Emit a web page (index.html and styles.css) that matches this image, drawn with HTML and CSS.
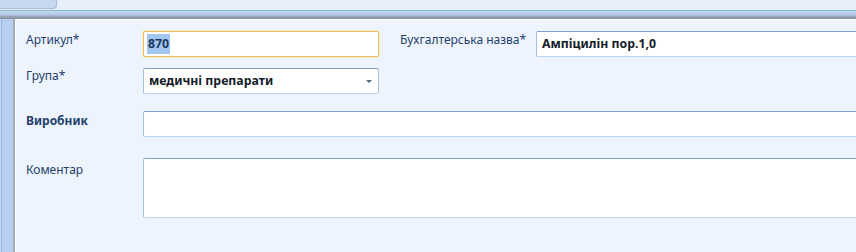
FILE: index.html
```html
<!DOCTYPE html>
<html lang="uk">
<head>
<meta charset="utf-8">
<title>Форма</title>
<link rel="stylesheet" href="styles.css">
</head>
<body>
<div class="window">
  <div class="topbar"><div class="tab"></div></div>
  <div class="header"></div>
  <div class="main">
    <div class="side"></div>
    <div class="panel">
      <div class="row r1">
        <label class="lbl">Артикул*</label>
        <div class="field short focus"><span class="sel">870</span></div>
        <label class="lbl lbl2">Бухгалтерська назва*</label>
        <div class="field grow">Ампіцилін пор.1,0</div>
      </div>
      <div class="row r2">
        <label class="lbl">Група*</label>
        <div class="field short combo"><span>медичні препарати</span><span class="arrow"></span></div>
      </div>
      <div class="row r3">
        <label class="lbl bold">Виробник</label>
        <div class="field grow"></div>
      </div>
      <div class="row r4">
        <label class="lbl">Коментар</label>
        <div class="field grow memo"></div>
      </div>
    </div>
  </div>
</div>
</body>
</html>
```
FILE: styles.css
```css
html, body {
  margin: 0;
  padding: 0;
  overflow: hidden;
  width: 856px;
  height: 252px;
  background: #eef4fd;
  font-family: "Noto Sans", "Liberation Sans", sans-serif;
  font-size: 12px;
}
.window {
  width: 856px;
  height: 252px;
  display: flex;
  flex-direction: column;
}
.topbar {
  height: 10px;
  background: #e6eff9;
  flex: none;
}
.tab {
  width: 56px;
  height: 8px;
  background: #c6d8ef;
  border-right: 1px solid #a9bcd4;
  border-bottom: 1px solid #a9bcd4;
  border-bottom-right-radius: 4px;
}
.header {
  height: 8px;
  flex: none;
  border-top: 1px solid #86bcc6;
  background: linear-gradient(#c3d8f3 0, #b2c8e6 50%, #9aa8ba 65%, #868f9c 100%);
}
.main {
  flex: 1;
  display: flex;
  min-height: 0;
}
.side {
  width: 12px;
  flex: none;
  background: #b6cef0;
  border-left: 1px solid #c4d7f1;
  box-shadow: inset 1px 0 0 #98b6de;
  border-right: 2px solid #a3adba;
}
.panel {
  flex: 1;
  min-width: 0;
  padding: 12px 0 0 11px;
  background: #eef4fd;
  box-shadow: inset 1px 1px 0 #ffffff;
  border-top-left-radius: 3px;
  box-sizing: border-box;
}
.row {
  display: flex;
  align-items: flex-start;
}
.r2 { margin-top: 11px; }
.r3 { margin-top: 17px; }
.r4 { margin-top: 21px; }
.lbl {
  width: 117px;
  flex: none;
  color: #23406a;
  line-height: 16px;
  padding-top: 1px;
}
.r3 .lbl { padding-top: 2px; }
.r4 .lbl { padding-top: 4px; }
.r2 .lbl { padding-top: 0; }
.lbl2 {
  width: 136px;
  margin-left: 21px;
}
.bold { font-weight: bold; }
.field {
  box-sizing: border-box;
  height: 26px;
  background: #ffffff;
  border: 1px solid #a6c0e7;
  border-top-color: #7e9ed0;
  border-bottom-color: #bad4f2;
  border-radius: 2px;
  padding: 0 5px;
  font-weight: bold;
  font-size: 12.3px;
  color: #141c28;
  line-height: 24px;
  white-space: nowrap;
  overflow: hidden;
}
.short { width: 236px; flex: none; }
.grow {
  flex: 1;
  min-width: 0;
  border-right: none;
  border-top-right-radius: 0;
  border-bottom-right-radius: 0;
}
.focus {
  border-color: #e2c263;
  box-shadow: 0 0 0 1px #f7ebc4;
  padding-left: 3px;
}
.sel {
  background: #a3c6ee;
  color: #1c3860;
  display: inline-block;
  line-height: 20px;
  padding: 0 1px;
  margin-top: 2px;
}
.combo {
  display: flex;
  justify-content: space-between;
  align-items: center;
  padding-right: 6px;
}
.arrow {
  width: 0;
  height: 0;
  border-left: 3px solid transparent;
  border-right: 3px solid transparent;
  border-top: 3px solid #56667d;
}
.memo { height: 60px; }
```
